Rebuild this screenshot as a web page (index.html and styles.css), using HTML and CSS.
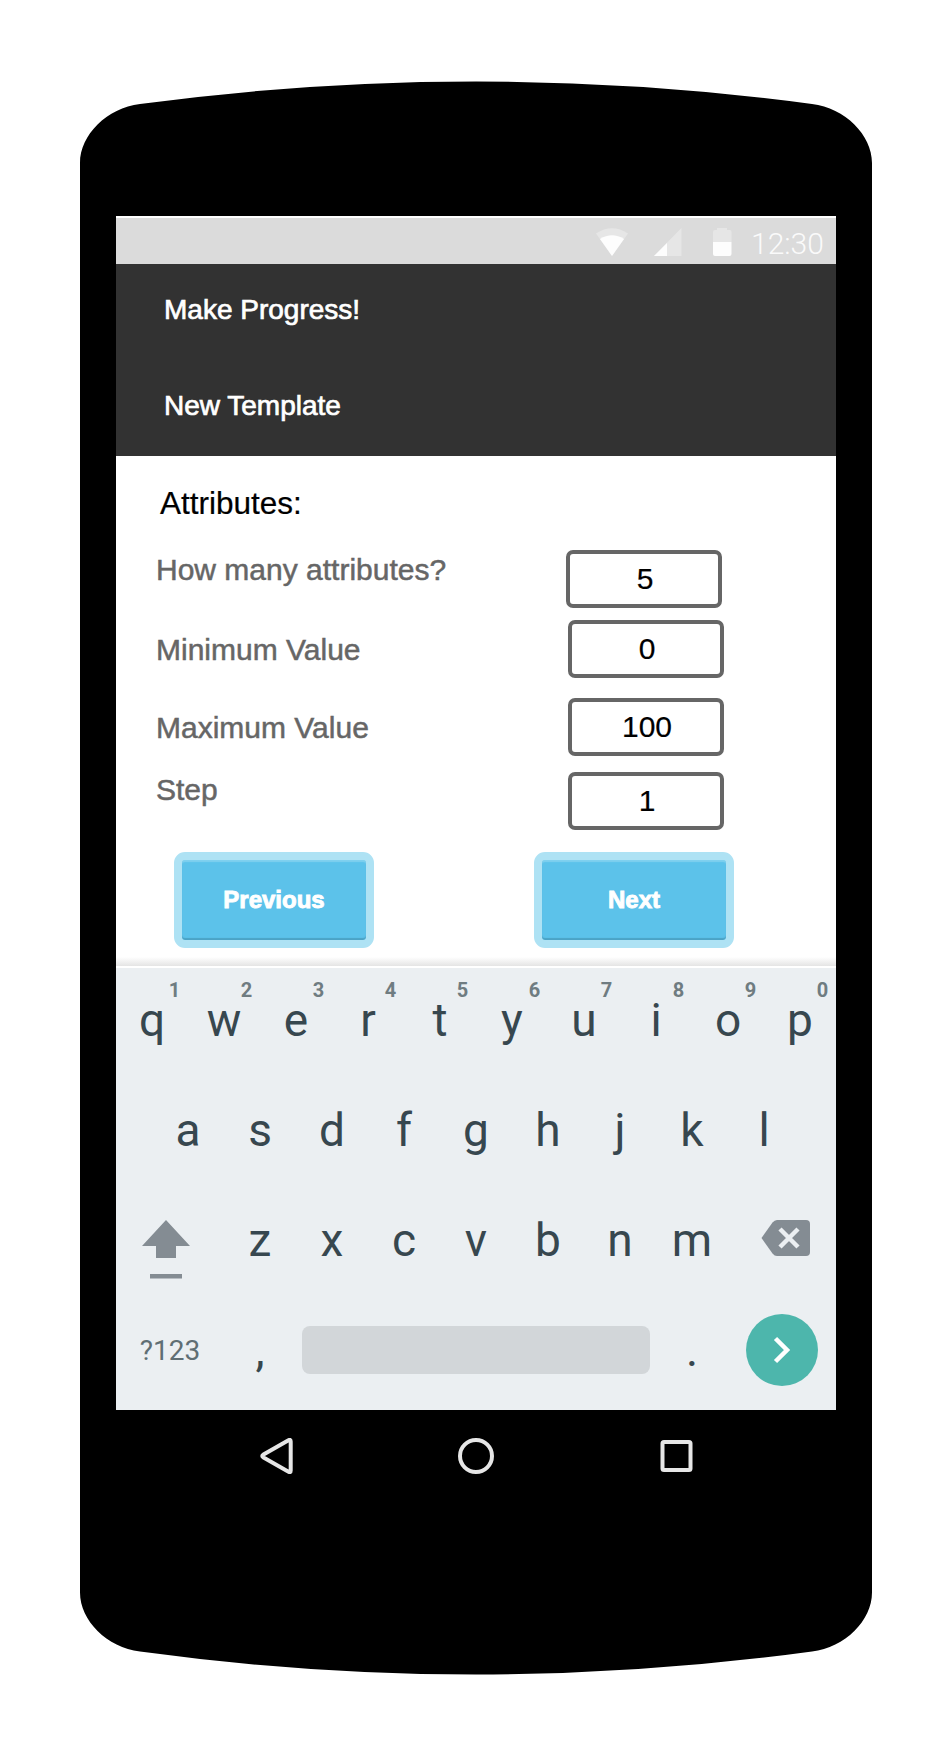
FILE: index.html
```html
<!DOCTYPE html>
<html lang="en">
<head>
<meta charset="utf-8">
<title>Make Progress!</title>
<link rel="stylesheet" href="styles.css">
</head>
<body>
<div class="phone">
  <div class="screen">
    <div class="status">
      <svg class="status-icons" width="140" height="28" viewBox="0 0 140 28">
        <path class="dim" d="M0 5.5Q16-5 32 5.5L16 28Z"/>
        <path class="lit" d="M4 11Q16 3.500 28 11L16 28Z"/>
        <path class="dim" d="M58 28L85.500 0V28Z"/>
        <path class="lit" d="M58 28L71 15V28Z"/>
        <path class="dim" d="M121 2V0H131V2H134Q135.500 2 135.500 4V14H117V4Q117 2 119 2Z"/>
        <path class="lit" d="M117 14H135.500V26Q135.500 28 133.500 28H119Q117 28 117 26Z"/>
      </svg>
      <span class="clock">12:30</span>
    </div>
    <header class="header">
      <div class="title">Make Progress!</div>
      <div class="title">New Template</div>
    </header>
    <main class="content">
      <h1 class="heading">Attributes:</h1>
      <div class="row row-count"><span class="label">How many attributes?</span><span class="field">5</span></div>
      <div class="row row-min"><span class="label">Minimum Value</span><span class="field">0</span></div>
      <div class="row row-max"><span class="label">Maximum Value</span><span class="field">100</span></div>
      <div class="row row-step"><span class="label">Step</span><span class="field">1</span></div>
      <div class="buttons">
        <button class="btn">Previous</button>
        <button class="btn">Next</button>
      </div>
    </main>
    <div class="keyboard">
      <div class="keys">
        <span class="key">q<sup class="alt">1</sup></span><span class="key">w<sup class="alt">2</sup></span><span class="key">e<sup class="alt">3</sup></span><span class="key">r<sup class="alt">4</sup></span><span class="key">t<sup class="alt">5</sup></span><span class="key">y<sup class="alt">6</sup></span><span class="key">u<sup class="alt">7</sup></span><span class="key">i<sup class="alt">8</sup></span><span class="key">o<sup class="alt">9</sup></span><span class="key">p<sup class="alt">0</sup></span>
      </div>
      <div class="keys">
        <span class="key">a</span><span class="key">s</span><span class="key">d</span><span class="key">f</span><span class="key">g</span><span class="key">h</span><span class="key">j</span><span class="key">k</span><span class="key">l</span>
      </div>
      <div class="keys">
        <span class="wide"><svg width="108" height="104" viewBox="0 0 108 104"><path class="glyph" d="M50 32L74 58H60V70H40V58H26ZM34 86H66V90.500H34Z"/></svg></span>
        <span class="key">z</span><span class="key">x</span><span class="key">c</span><span class="key">v</span><span class="key">b</span><span class="key">n</span><span class="key">m</span>
        <span class="wide"><svg width="108" height="104" viewBox="0 0 108 104"><path class="glyph" d="M33.500 50L44.500 34.500Q46.500 32 49 32H78Q82 32 82 36V64Q82 68 78 68H49Q46.500 68 44.500 65.500Z"/><path class="cross" d="M52 41L70 59M70 41L52 59"/></svg></span>
      </div>
      <div class="keys">
        <span class="wide symbols">?123</span>
        <span class="key">,</span>
        <span class="space"></span>
        <span class="key">.</span>
        <span class="wide"><span class="enter"><svg width="72" height="72" viewBox="0 0 72 72"><path d="M29.500 24.500L41 36L29.500 47.500"/></svg></span></span>
      </div>
    </div>
  </div>
  <nav class="nav">
    <svg width="36" height="36" viewBox="0 0 36 36"><path d="M30.500 2.200Q32.700 1 32.700 3.500V32.500Q32.700 35 30.500 33.800L5.500 19.500Q3 18 5.500 16.500Z"/></svg>
    <svg width="36" height="36" viewBox="0 0 36 36"><circle cx="18" cy="18" r="16"/></svg>
    <svg width="36" height="36" viewBox="0 0 36 36"><rect x="4.500" y="4" width="28" height="28" rx="1.500"/></svg>
  </nav>
</div>
</body>
</html>
```
FILE: styles.css
```css
* { box-sizing: border-box; }

body {
  margin: 0;
  background: #fff;
  font-family: "Liberation Sans", Arial, sans-serif;
}

.phone {
  width: 792px;
  height: 1594px;
  margin: 81px 80px;
  padding: 135px 36px 0;
  background: #000;
  clip-path: path("M0 82C0 54 27 27 60 23Q228 .5 396 .5T732 23C765 27 792 54 792 82V1511.500C792 1539.500 765 1566.500 732 1570.500Q564 1593.500 396 1593.500T60 1570.500C27 1566.500 0 1539.500 0 1511.500Z");
}

.screen { height: 1194px; background: #fff; }

.status {
  display: flex;
  align-items: center;
  justify-content: flex-end;
  height: 48px;
  padding-right: 13px;
  border-top: 2px solid #fff;
  background: #dbdbdb;
}

.status-icons { margin-right: 15px; margin-top: 2px; }
.dim { fill: #e6e6e6; }
.lit { fill: #fdfdfd; }

.clock {
  width: 72px;
  padding-top: 5px;
  color: #fafafa;
  font: 300 30px/41px Roboto, sans-serif;
  text-align: right;
  white-space: nowrap;
}

.header { height: 192px; padding-left: 48px; background: #323232; }

.title {
  height: 96px;
  color: #fff;
  font-size: 28px;
  line-height: 92px;
  -webkit-text-stroke: .7px #fff;
}

.content {
  position: relative;
  height: 510px;
  background: linear-gradient(#fff 501px, #e4e4e4 510px);
}

.heading {
  margin: 0;
  padding-left: 44px;
  color: #000;
  font-size: 31.500px;
  font-weight: 400;
  line-height: 94px;
  -webkit-text-stroke: .2px #000;
}

.row {
  display: flex;
  justify-content: space-between;
  height: 58px;
  padding: 0 112px 0 40px;
  font-size: 30px;
  line-height: 59px;
}

.row-count { padding-right: 114px; }
.row-count .label { line-height: 39px; }
.row-min { margin-top: 12px; }
.row-max { margin-top: 20px; }
.row-step { margin-top: 16px; }
.row-step .label { line-height: 35px; }

.label { color: #666; -webkit-text-stroke: .5px #666; }

.field {
  width: 156px;
  padding-left: 2px;
  border: 4px solid #666;
  border-radius: 7px;
  color: #000;
  line-height: 50px;
  text-align: center;
  -webkit-text-stroke: .2px #000;
}

.buttons {
  display: flex;
  gap: 160px;
  padding: 22px 0 0 58px;
}

.btn {
  width: 200px;
  height: 96px;
  padding: 0;
  border: 8px solid #aee2f4;
  border-radius: 11px;
  background: #5cc2ea;
  box-shadow: inset 0 -2px 1px #4ba3c6, inset 0 2px 1px #7fd0ef;
  color: #fff;
  font: bold 24px/78px "Liberation Sans", Arial, sans-serif;
  -webkit-text-stroke: .9px #fff;
}

.keyboard {
  height: 444px;
  border-top: 2px solid #fff;
  background: #ebeff2;
  color: #37474f;
  font: 400 46px/104px Roboto, sans-serif;
}

.keys {
  display: flex;
  justify-content: center;
  height: 104px;
  margin-bottom: 6px;
}

.key { position: relative; width: 72px; text-align: center; }

.alt {
  position: absolute;
  top: 10px;
  left: 48px;
  width: 21px;
  color: #6f7c81;
  font-size: 20px;
  font-weight: 700;
  line-height: 24px;
}

.wide { width: 108px; height: 104px; text-align: center; }
.wide svg { display: block; }
.symbols { color: #5f6e74; font-size: 28px; line-height: 106px; }
.glyph { fill: #848c93; }
.cross { fill: none; stroke: #ebeff2; stroke-width: 4.500; }

.space {
  width: 348px;
  height: 48px;
  margin: 28px 6px;
  border-radius: 8px;
  background: #d2d6d9;
}

.enter {
  display: block;
  width: 72px;
  height: 72px;
  margin: 16px auto;
  border-radius: 50%;
  background: #4db6ac;
}

.enter path { fill: none; stroke: #fff; stroke-width: 4.500; }

.nav {
  display: flex;
  justify-content: center;
  gap: 164px;
  padding-top: 28px;
}

.nav svg { fill: none; stroke: #e6e6e6; stroke-width: 4; }
```
